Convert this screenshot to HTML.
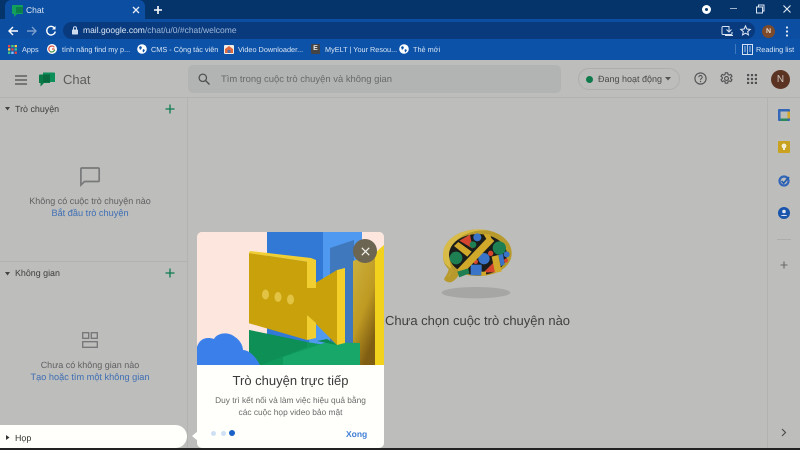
<!DOCTYPE html>
<html lang="vi"><head><meta charset="utf-8"><title>Chat</title>
<style>
html,body{margin:0;padding:0;width:800px;height:450px;overflow:hidden;background:#bdbdbb}
body{font-family:"Liberation Sans","Noto Sans CJK SC",sans-serif;position:relative;filter:blur(.35px);text-rendering:geometricPrecision}
.a{position:absolute;white-space:nowrap}
svg{position:absolute;overflow:visible}
.bm{color:#dbe6f5;font-size:7.3px;top:44px;line-height:12px}
.sec{color:#3c3c3c;font-size:8.9px;line-height:12px}
.gr{color:#5f6062;font-size:9px;line-height:12px;text-align:center}
.li{color:#3f6fb4;font-size:9.200px;line-height:12px;text-align:center}
</style></head><body>
<div class="a" style="left:0;top:0;width:800px;height:19px;background:#04346a"></div>
<div class="a" style="left:5px;top:0;width:140px;height:20px;background:#0b4ea2;border-radius:6px 6px 0 0"></div>
<div class="a" style="left:0;top:19px;width:800px;height:21px;background:#0b4ea2"></div>
<div class="a" style="left:0;top:39px;width:800px;height:21px;background:#0b52a8"></div>

<svg style="left:11px;top:4px" width="13" height="13" viewBox="0 0 13 13"><path d="M2 1h9a1 1 0 0 1 1 1v7a1 1 0 0 1-1 1H6l-3 3v-3H2a1 1 0 0 1-1-1V2a1 1 0 0 1 1-1z" fill="#12a05c"/><path d="M5 3h7v6H5z" fill="#0d7f4b"/></svg>
<div class="a" style="left:26px;top:4px;color:#dbe6f5;font-size:8.5px;line-height:12px">Chat</div>
<svg style="left:132px;top:6px" width="8" height="8" viewBox="0 0 8 8"><path d="M1 1l6 6M7 1L1 7" stroke="#e8eef8" stroke-width="1.300"/></svg>
<svg style="left:153px;top:5px" width="10" height="10" viewBox="0 0 10 10"><path d="M5 1v8M1 5h8" stroke="#fff" stroke-width="1.600"/></svg>

<div class="a" style="left:702px;top:5px;width:9px;height:9px;border-radius:50%;background:#fff"></div>
<div class="a" style="left:705px;top:8px;width:3px;height:3px;border-radius:50%;background:#04346a"></div>
<div class="a" style="left:730px;top:8px;width:7px;height:1px;background:#9fb3cf"></div>
<svg style="left:755px;top:4px" width="10" height="10" viewBox="0 0 10 10"><path d="M1.500 3h6v6h-6zM3.500 3V1h5.500v6H7.500" fill="none" stroke="#dbe4f1" stroke-width="1"/></svg>
<svg style="left:782px;top:4px" width="10" height="10" viewBox="0 0 10 10"><path d="M1.500 1.500l7 7M8.500 1.500l-7 7" stroke="#e6edf6" stroke-width="1.100"/></svg>

<svg style="left:7px;top:25px" width="12" height="12" viewBox="0 0 12 12"><path d="M11 6H2M6 2L2 6l4 4" fill="none" stroke="#fff" stroke-width="1.400"/></svg>
<svg style="left:26px;top:25px" width="12" height="12" viewBox="0 0 12 12"><path d="M1 6h9M6 2l4 4-4 4" fill="none" stroke="#7c9ccb" stroke-width="1.400"/></svg>
<svg style="left:45px;top:25px" width="12" height="12" viewBox="0 0 12 12"><path d="M9.800 3.500A4.300 4.300 0 1 0 10.300 6.500" fill="none" stroke="#fff" stroke-width="1.400"/><path d="M10.500 1v3.500H7z" fill="#fff"/></svg>
<div class="a" style="left:63px;top:22px;width:692px;height:17px;border-radius:9px;background:#093a7d"></div>
<svg style="left:71px;top:26px" width="8" height="9" viewBox="0 0 8 9"><rect x="1" y="3.500" width="6" height="5" rx=".8" fill="#cfdcee"/><path d="M2.500 3.500V2.200a1.500 1.500 0 0 1 3 0v1.300" fill="none" stroke="#cfdcee"/></svg>
<div class="a" style="left:83px;top:24px;font-size:8.500px;line-height:13px;color:#dce7f5">mail.google.com<span style="color:#9fb8d9">/chat/u/0/#chat/welcome</span></div>

<svg style="left:721px;top:25px" width="12" height="12" viewBox="0 0 12 12"><path d="M8 1.500H2a1 1 0 0 0-1 1v6a1 1 0 0 0 1 1h8a1 1 0 0 0 1-1V7" fill="none" stroke="#dbe4f1"/><path d="M8 1v5M5.500 4.500L8 7l2.500-2.500M4 10.500h8" fill="none" stroke="#dbe4f1"/></svg>
<svg style="left:740px;top:25px" width="11" height="11" viewBox="0 0 12 12"><path d="M6 1l1.500 3.400 3.700.4-2.800 2.400.8 3.600L6 8.900l-3.200 1.900.8-3.600L.8 4.800l3.700-.4z" fill="none" stroke="#e5ecf6" stroke-width="1.100"/></svg>
<div class="a" style="left:762px;top:25px;width:13px;height:13px;border-radius:50%;background:#7d4a2b;color:#e6dcd3;font-size:7px;font-weight:bold;line-height:13px;text-align:center">N</div>
<svg style="left:785px;top:26px" width="4" height="11" viewBox="0 0 4 11"><circle cx="2" cy="1.500" r="1.100" fill="#e6edf6"/><circle cx="2" cy="5.500" r="1.100" fill="#e6edf6"/><circle cx="2" cy="9.500" r="1.100" fill="#e6edf6"/></svg>

<svg style="left:8px;top:45px" width="9" height="9" viewBox="0 0 9 9"><g><rect x="0" y="0" width="2.300" height="2.300" fill="#e44"/><rect x="3.300" y="0" width="2.300" height="2.300" fill="#4c8"/><rect x="6.600" y="0" width="2.300" height="2.300" fill="#fc4"/><rect x="0" y="3.300" width="2.300" height="2.300" fill="#fc4"/><rect x="3.300" y="3.300" width="2.300" height="2.300" fill="#e44"/><rect x="6.600" y="3.300" width="2.300" height="2.300" fill="#4c8"/><rect x="0" y="6.600" width="2.300" height="2.300" fill="#4c8"/><rect x="3.300" y="6.600" width="2.300" height="2.300" fill="#8cf"/><rect x="6.600" y="6.600" width="2.300" height="2.300" fill="#e44"/></g></svg>
<div class="a bm" style="left:22px">Apps</div>
<svg style="left:47px;top:44px" width="10" height="10" viewBox="0 0 10 10"><circle cx="5" cy="5" r="5" fill="#fff"/><path d="M7.500 5H5M7.300 3.300A3 3 0 1 0 7.700 5.800" fill="none" stroke="#d9503f" stroke-width="1.200"/><path d="M7.700 5.800A3 3 0 0 1 3 7.300" fill="none" stroke="#3aa757" stroke-width="1.200"/></svg>
<div class="a bm" style="left:62px">tính năng find my p...</div>
<svg style="left:137px;top:44px" width="10" height="10" viewBox="0 0 10 10"><circle cx="5" cy="5" r="4.800" fill="#fff"/><path d="M2 3l2-1 1 2-2 2zM6 5l2 1-1.500 2.500L5.500 7z" fill="#0b52a8"/></svg>
<div class="a bm" style="left:151px">CMS - Cộng tác viên</div>
<svg style="left:224px;top:45px" width="10" height="9" viewBox="0 0 10 9"><rect width="10" height="9" rx="1" fill="#f1ece4"/><path d="M1 8V4l4-3 4 3v4z" fill="#e0683c"/><rect x="3.500" y="5" width="3" height="3" fill="#4d6fb0"/></svg>
<div class="a bm" style="left:238px">Video Downloader...</div>
<div class="a" style="left:311px;top:44px;width:9px;height:10px;background:#444;color:#eee;font-size:7px;font-weight:bold;line-height:10px;text-align:center;border-radius:1px">E</div>
<div class="a bm" style="left:325px">MyELT | Your Resou...</div>
<svg style="left:399px;top:44px" width="10" height="10" viewBox="0 0 10 10"><circle cx="5" cy="5" r="4.800" fill="#fff"/><path d="M2 3l2-1 1 2-2 2zM6 5l2 1-1.500 2.500L5.500 7z" fill="#0b52a8"/></svg>
<div class="a bm" style="left:413px">Thẻ mới</div>
<div class="a" style="left:735px;top:44px;width:1px;height:10px;background:#3f7ac0"></div>
<svg style="left:742px;top:44px" width="11" height="11" viewBox="0 0 11 11"><rect x=".5" y=".5" width="10" height="10" fill="none" stroke="#d6e2f2"/><path d="M5.500 1v9M2 3h2M2 5h2M2 7h2M7 3h2M7 5h2M7 7h2" stroke="#d6e2f2" stroke-width=".8"/></svg>
<div class="a bm" style="left:756px">Reading list</div>

<!-- app header -->
<div class="a" style="left:0;top:97px;width:800px;height:1px;background:#b2b2b0"></div>
<svg style="left:15px;top:75px" width="12" height="10" viewBox="0 0 12 10"><path d="M0 1h12M0 5h12M0 9h12" stroke="#4c4c4c" stroke-width="1.300"/></svg>
<svg style="left:38px;top:71px" width="18" height="18" viewBox="0 0 18 18"><path d="M2 3.500h10V12H6l-3.500 3.500V12H1V4.500a1 1 0 0 1 1-1z" fill="#0a7a49"/><path d="M5 1.500h11a1 1 0 0 1 1 1V11H5z" fill="#0c8f58"/><path d="M5 3.500h7V11H5z" fill="#0a6b40"/></svg>
<div class="a" style="left:63px;top:71px;font-size:13px;line-height:17px;color:#5c5c5c">Chat</div>
<div class="a" style="left:188px;top:65px;width:373px;height:28px;border-radius:5px;background:#b2b4b3"></div>
<svg style="left:198px;top:73px" width="12" height="12" viewBox="0 0 12 12"><circle cx="4.800" cy="4.800" r="3.700" fill="none" stroke="#4f5153" stroke-width="1.300"/><path d="M7.500 7.500l4 4" stroke="#4f5153" stroke-width="1.400"/></svg>
<div class="a" style="left:221px;top:73px;font-size:9.450px;line-height:14px;color:#68696a">Tìm trong cuộc trò chuyện và không gian</div>
<div class="a" style="left:578px;top:68px;width:102px;height:22px;border:1px solid #aeaeac;border-radius:12px;box-sizing:border-box"></div>
<div class="a" style="left:586px;top:76px;width:7px;height:7px;border-radius:50%;background:#0f7a4b"></div>
<div class="a" style="left:598px;top:72px;font-size:9px;line-height:14px;color:#4a4a4a">Đang hoạt động</div>
<svg style="left:665px;top:77px" width="6" height="4" viewBox="0 0 6 4"><path d="M0 0h6L3 3.500z" fill="#555"/></svg>
<svg style="left:694px;top:72px" width="13" height="13" viewBox="0 0 13 13"><circle cx="6.500" cy="6.500" r="5.600" fill="none" stroke="#4f5052" stroke-width="1.100"/><path d="M4.800 5.200a1.700 1.700 0 1 1 2.600 1.400c-.6.400-.9.700-.9 1.300" fill="none" stroke="#4f5052"/><circle cx="6.500" cy="9.500" r=".7" fill="#4f5052"/></svg>
<svg style="left:720px;top:72px" width="13" height="13" viewBox="0 0 13 13"><circle cx="6.500" cy="6.500" r="1.900" fill="none" stroke="#4f5052" stroke-width="1.100"/><path d="M5.300.8h2.400l.3 1.700 1.300.6 1.500-.8 1.200 2-1.300 1.100v1.200l1.300 1.100-1.200 2-1.500-.8-1.300.6-.3 1.700H5.300L5 9.500l-1.300-.6-1.500.8-1.200-2 1.300-1.100V5.400L1 4.300l1.200-2 1.500.8L5 2.500z" fill="none" stroke="#4f5052" stroke-width="1.100"/></svg>
<svg style="left:747px;top:74px" width="10" height="10" viewBox="0 0 10 10" fill="#4f5052"><rect x="0" y="0" width="2.200" height="2.200"/><rect x="3.900" y="0" width="2.200" height="2.200"/><rect x="7.800" y="0" width="2.200" height="2.200"/><rect x="0" y="3.900" width="2.200" height="2.200"/><rect x="3.900" y="3.900" width="2.200" height="2.200"/><rect x="7.800" y="3.900" width="2.200" height="2.200"/><rect x="0" y="7.800" width="2.200" height="2.200"/><rect x="3.900" y="7.800" width="2.200" height="2.200"/><rect x="7.800" y="7.800" width="2.200" height="2.200"/></svg>
<div class="a" style="left:771px;top:70px;width:19px;height:19px;border-radius:50%;background:#5b3322;color:#cfc7c1;font-size:10px;line-height:19px;text-align:center">N</div>

<!-- left column -->
<div class="a" style="left:187px;top:98px;width:1px;height:350px;background:#b3b3b1"></div>
<svg style="left:5px;top:107px" width="5" height="4" viewBox="0 0 5 4"><path d="M0 0h5L2.500 3.500z" fill="#444"/></svg>
<div class="a sec" style="left:15px;top:103px">Trò chuyện</div>
<svg style="left:165px;top:104px" width="10" height="10" viewBox="0 0 10 10"><path d="M5 .5v9M.5 5h9" stroke="#0d7c52" stroke-width="1.300"/></svg>
<svg style="left:80px;top:167px" width="20" height="19" viewBox="0 0 20 19"><path d="M1.800 1h16.400a1 1 0 0 1 1 1v11.500a1 1 0 0 1-1 1H4.500L.9 18V2a1 1 0 0 1 .9-1z" fill="none" stroke="#77797a" stroke-width="1.700"/></svg>
<div class="a gr" style="left:0;width:180px;top:195px">Không có cuộc trò chuyện nào</div>
<div class="a li" style="left:0;width:180px;top:207px">Bắt đầu trò chuyện</div>
<div class="a" style="left:0;top:261px;width:187px;height:1px;background:#b2b2b0"></div>
<svg style="left:5px;top:272px" width="5" height="4" viewBox="0 0 5 4"><path d="M0 0h5L2.500 3.500z" fill="#444"/></svg>
<div class="a sec" style="left:15px;top:267px">Không gian</div>
<svg style="left:165px;top:268px" width="10" height="10" viewBox="0 0 10 10"><path d="M5 .5v9M.5 5h9" stroke="#0d7c52" stroke-width="1.300"/></svg>
<svg style="left:82px;top:332px" width="16" height="16" viewBox="0 0 16 16" fill="none" stroke="#737577" stroke-width="1.300"><rect x=".7" y=".7" width="6" height="5.600"/><rect x="9.300" y=".7" width="6" height="5.600"/><rect x=".7" y="9.700" width="14.600" height="5.600"/></svg>
<div class="a gr" style="left:0;width:180px;top:359px">Chưa có không gian nào</div>
<div class="a li" style="left:0;width:180px;top:371px">Tạo hoặc tìm một không gian</div>
<div class="a" style="left:0;top:425px;width:187px;height:23px;background:#fffffb;border-radius:0 12px 12px 0"></div>
<svg style="left:6px;top:435px" width="4" height="5" viewBox="0 0 4 5"><path d="M0 0l3.500 2.500L0 5z" fill="#333"/></svg>
<div class="a sec" style="left:15px;top:432px;color:#333">Họp</div>

<!-- center -->
<svg style="left:440px;top:226px" width="76" height="76" viewBox="180 18 228 228">
<ellipse cx="288" cy="218" rx="103" ry="17" fill="#a6a6a4"/>
<path d="M190 95C195 55 245 28 295 28c55 0 100 30 100 72 0 40-45 68-100 68-20 0-40-3-55-9-5 12-20 28-30 28-12 0-20-8-17-12 5-8 12-18 13-28C192 135 187 118 190 95z" fill="#b89a2c"/>
<path d="M190 95C195 55 245 28 295 28c10 0 20 1 30 3-50-2-100 15-115 65-4 20 0 40 7 55-8 10-12 20-14 24 5-8 12-18 13-28C192 135 187 118 190 95z" fill="#d9bc48"/>
<ellipse cx="294" cy="104" rx="87" ry="62" fill="#1b1d1a"/>
<path d="M238 62l32-18 8 42z" fill="#d6462f"/><path d="M310 158l34-34 8 32z" fill="#d6462f"/>
<circle cx="287" cy="125" r="7" fill="#d6462f"/><circle cx="332" cy="100" r="8" fill="#d6462f"/><circle cx="378" cy="122" r="6" fill="#d6462f"/>
<circle cx="358" cy="84" r="20" fill="#1d7f52"/><circle cx="228" cy="114" r="19" fill="#1d7f52"/><circle cx="279" cy="74" r="10" fill="#1d7f52"/>
<circle cx="292" cy="52" r="12" fill="#3a74c9"/><circle cx="312" cy="116" r="17" fill="#3a74c9"/><circle cx="380" cy="103" r="9" fill="#3a74c9"/>
<path d="M272 134h33v32h-33z" fill="#3a74c9"/><path d="M355 105l14-3 5 32-12 4z" fill="#3a74c9"/>
<path d="M222 78l13-12 40 29-13 15z" fill="#d0a92b"/>
<path d="M232 148l95-100 16 15-98 102z" fill="#d0a92b"/><path d="M310 42l20 2 6 16-16-2z" fill="#d0a92b"/>
<path d="M335 110l20-5 10 50-20 3z" fill="#d0a92b"/>
<path d="M232 155l33-10 3 15-30 12z" fill="#1d7f52"/><path d="M304 155h14v12h-14z" fill="#d0a92b"/>
</svg>
<div class="a" style="left:385px;top:313px;font-size:13px;line-height:16px;color:#3f3f3f">Chưa chọn cuộc trò chuyện nào</div>

<!-- right rail -->
<div class="a" style="left:767px;top:98px;width:1px;height:350px;background:#b3b3b1"></div>
<svg style="left:778px;top:109px" width="12" height="12" viewBox="0 0 12 12"><rect width="12" height="12" rx="1" fill="#3367b8"/><rect x="2.500" y="2.500" width="7" height="7" fill="#bcbcb9"/><path d="M9.500 2.500H12v7H9.500z" fill="#d2a82a"/><path d="M2.500 9.500h7V12h-7z" fill="#2a8a58"/></svg>
<svg style="left:778px;top:141px" width="12" height="12" viewBox="0 0 12 12"><rect width="12" height="12" rx="1" fill="#c9a31f"/><circle cx="6" cy="5" r="2.400" fill="#f2eed8"/><rect x="5" y="7" width="2" height="2" fill="#f2eed8"/></svg>
<svg style="left:778px;top:175px" width="12" height="12" viewBox="0 0 12 12"><circle cx="6" cy="6" r="4.500" fill="none" stroke="#3165b8" stroke-width="2.200"/><path d="M3.500 6l2.200 2.200L11 2" fill="none" stroke="#1e5bb0" stroke-width="1.600"/></svg>
<svg style="left:778px;top:207px" width="12" height="12" viewBox="0 0 12 12"><circle cx="6" cy="6" r="6" fill="#1a55ac"/><circle cx="6" cy="4.500" r="1.800" fill="#dfe6f2"/><path d="M2.800 9c.5-1.500 6-1.500 6.400 0z" fill="#dfe6f2"/></svg>
<div class="a" style="left:777px;top:239px;width:14px;height:1px;background:#acacaa"></div>
<svg style="left:780px;top:261px" width="8" height="8" viewBox="0 0 8 8"><path d="M4 .5v7M.5 4h7" stroke="#68696a" stroke-width="1.100"/></svg>
<svg style="left:781px;top:428px" width="6" height="9" viewBox="0 0 6 9"><path d="M1 1l3.500 3.500L1 8" fill="none" stroke="#4d4d4d" stroke-width="1.200"/></svg>

<!-- popup -->
<div class="a" style="left:197px;top:232px;width:187px;height:216px;background:#fffffb;border-radius:5px;overflow:hidden">
<svg style="left:0;top:0" width="187" height="133" viewBox="0 0 187 133">
<defs><linearGradient id="y" x1="0" y1="0" x2=".5" y2="1"><stop offset="0" stop-color="#cdb23f"/><stop offset=".6" stop-color="#bf9a22"/><stop offset="1" stop-color="#7f5d12"/></linearGradient></defs>
<rect width="187" height="133" fill="#fde6de"/>
<rect x="70" y="0" width="95" height="120" fill="#3179d5"/>
<rect x="126" y="0" width="39" height="115" fill="#4f9af0"/>
<rect x="112" y="50" width="30" height="70" fill="#4f9af0"/>
<path d="M133 16l24-8v108h-24z" fill="#4078bd"/>
<path d="M156 29l22-8v112h-22z" fill="url(#y)"/><path d="M178 21l9-8v120h-9z" fill="#f2d21c"/>
<path d="M52 98l58 12 30 5 23-4v22H52z" fill="#0f9a5c"/>
<path d="M52 98l58 12v5l-46 18H52z" fill="#0d8f55"/>
<path d="M86 125l44-15 33 1v22H86z" fill="#18a669"/>
<path d="M120 109l10-2 10 6z" fill="#0a8a50"/>
<path d="M52 21l58 8.700V56l30-18v75l-30-30v25l-58-16.700z" fill="#c9a20b"/>
<path d="M52 21l1-2 61 7 5 2v28h-9V29.700z" fill="#f1cf33"/>
<path d="M140 38l8-2v75l-8 2z" fill="#f4cf28"/>
<path d="M110 83l9 8v15l-9 2z" fill="#f1cf33"/>
<ellipse cx="68.500" cy="62.500" rx="3.500" ry="5" fill="#e2c344"/><ellipse cx="81" cy="65" rx="3.500" ry="5" fill="#e2c344"/><ellipse cx="93.500" cy="67.500" rx="3.500" ry="5" fill="#e2c344"/>
<path d="M0 133V115c2-7 8-11 17-8 3-6 14-8 21-2 5 3 8 9 8 13 5 0 12 5 17 15z" fill="#3b80ea"/>
</svg>
<div class="a" style="left:0;top:140px;width:187px;text-align:center;font-size:13px;line-height:17px;color:#3a3a3a">Trò chuyện trực tiếp</div>
<div class="a" style="left:0;top:162px;width:187px;text-align:center;font-size:8.350px;line-height:12px;color:#6a6a6a">Duy trì kết nối và làm việc hiệu quả bằng</div>
<div class="a" style="left:0;top:174px;width:187px;text-align:center;font-size:8.350px;line-height:12px;color:#6a6a6a">các cuộc họp video bảo mật</div>
<div class="a" style="left:14px;top:199px;width:5px;height:5px;border-radius:50%;background:#cfe0f5"></div>
<div class="a" style="left:24px;top:199px;width:5px;height:5px;border-radius:50%;background:#cfe0f5"></div>
<div class="a" style="left:32px;top:198px;width:6px;height:6px;border-radius:50%;background:#1761c9"></div>
<div class="a" style="left:149px;top:196px;font-size:8.500px;font-weight:bold;line-height:12px;color:#3f7fd6">Xong</div>
</div>
<div class="a" style="left:353px;top:239px;width:24px;height:24px;border-radius:50%;background:#6b6552"></div>
<svg style="left:360.500px;top:246.500px" width="9" height="9" viewBox="0 0 9 9"><path d="M.8.800l7.400 7.400M8.200.800L.8 8.200" stroke="#f4f2ec" stroke-width="1.200"/></svg>
<svg style="left:192px;top:431px" width="6" height="10" viewBox="0 0 6 10"><path d="M6 0L0 5l6 5z" fill="#fffffb"/></svg>
<div class="a" style="left:0;top:448px;width:800px;height:2px;background:#222"></div>
</body></html>
